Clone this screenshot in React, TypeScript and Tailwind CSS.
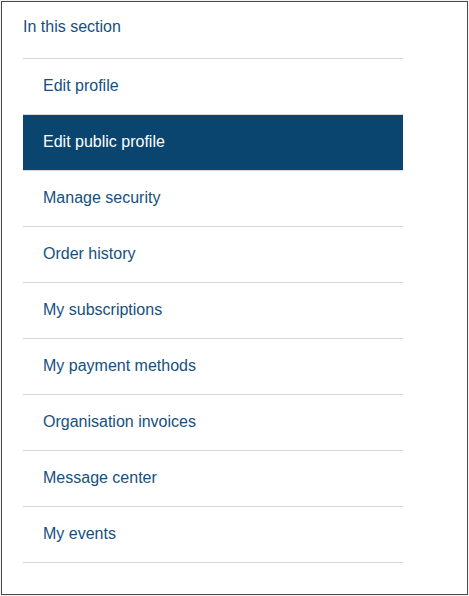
import React from "react";

const items = [
  "Edit profile",
  "Edit public profile",
  "Manage security",
  "Order history",
  "My subscriptions",
  "My payment methods",
  "Organisation invoices",
  "Message center",
  "My events",
];

export default function App() {
  return (
    <div className="w-[469px] h-[596px] bg-[#f2f2f2] pt-px pl-px" style={{ fontFamily: '"Liberation Sans", Arial, sans-serif' }}>
      <div className="w-[467px] h-[594px] bg-white border border-[#4a4a4a] pl-[21px]">
        <nav className="w-[380px]">
          <div className="h-[57px] pt-[13px] border-b border-[#d8d8d8] text-[16px] leading-[24px] text-[#155080]">
            In this section
          </div>
          <ul>
            {items.map((it, i) => {
              const active = i === 1;
              return (
                <li
                  key={it}
                  className={
                    active
                      ? "h-[56px] flex items-center px-[20px] pb-[2px] bg-[#0a4570] text-white border-b border-[#d8d8d8] text-[16px]"
                      : "h-[56px] flex items-center px-[20px] pb-[2px] text-[#155080] border-b border-[#d8d8d8] text-[16px]"
                  }
                >
                  {it}
                </li>
              );
            })}
          </ul>
        </nav>
      </div>
    </div>
  );
}
